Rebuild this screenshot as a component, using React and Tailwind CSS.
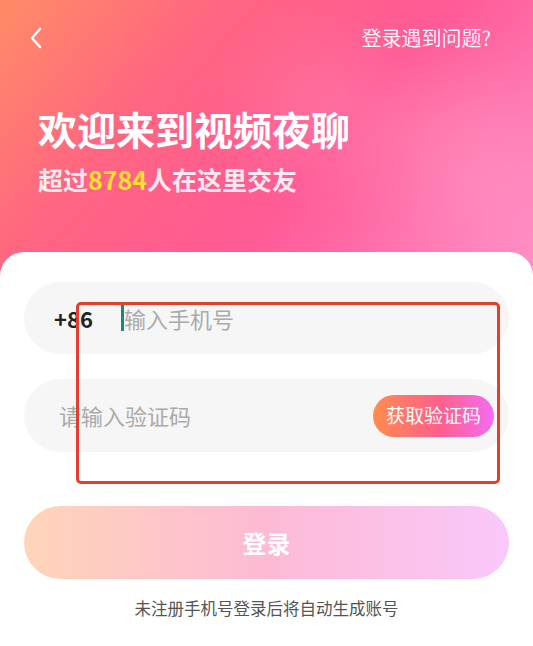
import React from 'react';

const FONT = { fontFamily: '"Noto Sans CJK SC", "Noto Sans", sans-serif' };

const App = () => {
  return (
    <div
      className="relative w-[533px] h-[646px] overflow-hidden bg-white bg-no-repeat bg-[length:533px_290px] bg-[linear-gradient(130deg,#ff8c66_0%,#ff6582_30%,#ff5a96_58%,#ff75b0_80%,#ff92ca_100%)]"
      style={FONT}
    >
      {/* soft blobs in the header */}
      <div className="absolute left-[265px] top-[55px] w-[130px] h-[110px] rounded-full bg-white/15 blur-2xl" />
      <div className="absolute left-[395px] top-[80px] w-[140px] h-[150px] rounded-full bg-white/15 blur-2xl" />

      <header className="relative h-[252px]">
        <div className="flex items-center justify-between pl-[28px] pr-[42px] pt-[26px]">
          <svg width="16" height="22" viewBox="0 0 16 22" fill="none">
            <path d="M12 2 L4 11 L12 20" stroke="white" strokeWidth="2.6" strokeLinecap="round" strokeLinejoin="round" />
          </svg>
          <span className="text-[20px] leading-[24px] text-white/95">登录遇到问题?</span>
        </div>
        <h1 className="mt-[53px] pl-[38px] text-[39px] leading-[50px] font-bold text-white">
          欢迎来到视频夜聊
        </h1>
        <p className="mt-[10px] pl-[38px] text-[25px] leading-[32px] font-bold text-[#ffe9f1]">
          超过<span className="text-[#ffe02a]">8784</span>人在这里交友
        </p>
      </header>

      <main className="relative bg-white rounded-t-[24px] h-[394px] px-6 pt-[30px]">
        <div className="flex items-center h-[72px] rounded-full bg-[#f6f6f6] pl-[30px]">
          <span className="text-[22px] font-bold text-[#222] w-[67px]">+86</span>
          <span className="w-[3px] h-[26px] bg-[#148c7c]" />
          <span className="text-[22px] text-[#aaaaaa]">输入手机号</span>
        </div>

        <div className="mt-[25px] flex items-center justify-between h-[73px] rounded-full bg-[#f6f6f6] pl-[35px] pr-[15px]">
          <span className="text-[22px] text-[#aaaaaa]">请输入验证码</span>
          <button className="w-[121px] h-[42px] rounded-full text-[19px] text-white bg-[linear-gradient(90deg,#ff8c4e_0%,#ff5f8c_55%,#f46cf2_100%)]">
            获取验证码
          </button>
        </div>

        <button className="mt-[54px] w-full h-[73px] rounded-full text-[24px] font-bold text-white bg-[linear-gradient(90deg,#ffd5b9_0%,#fdbad5_50%,#f9c8fa_100%)]">
          登录
        </button>

        <p className="mt-[17px] text-center text-[16.5px] text-[#555]">
          未注册手机号登录后将自动生成账号
        </p>
      </main>

      {/* annotation frame */}
      <div className="absolute left-[76px] top-[302px] w-[424px] h-[182px] border-[3px] border-[#e0402c] rounded-[5px]" />
    </div>
  );
};

export default App;
